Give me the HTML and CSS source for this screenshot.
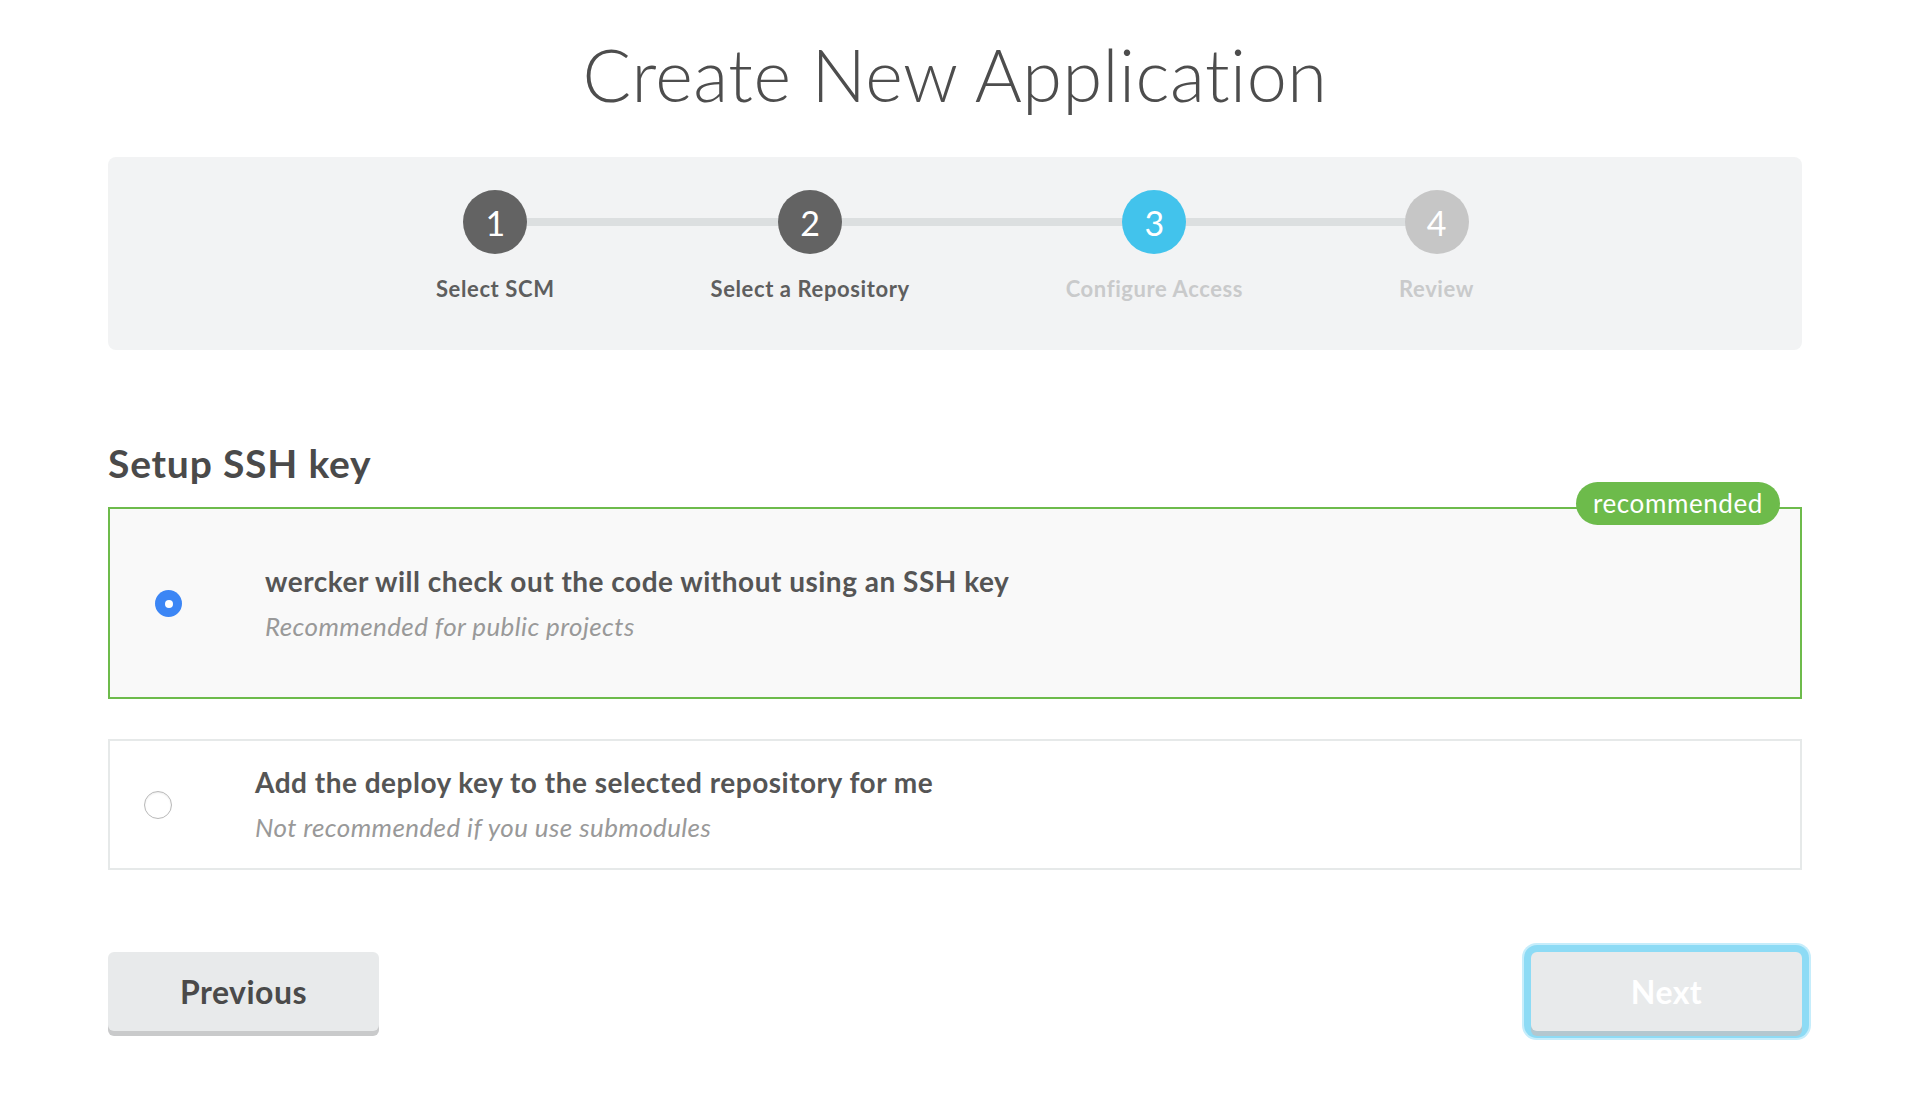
FILE: index.html
```html
<!DOCTYPE html>
<html lang="en">
<head>
<meta charset="utf-8">
<title>Create New Application</title>
<link rel="stylesheet" href="styles.css">
</head>
<body>
<main class="page">
  <h1 class="title">Create New Application</h1>

  <div class="stepper">
    <div class="step step--done">
      <span class="step__dot">1</span>
      <span class="step__label">Select SCM</span>
    </div>
    <div class="step step--done">
      <span class="step__dot">2</span>
      <span class="step__label">Select a Repository</span>
    </div>
    <div class="step step--current">
      <span class="step__dot">3</span>
      <span class="step__label">Configure Access</span>
    </div>
    <div class="step step--todo">
      <span class="step__dot">4</span>
      <span class="step__label">Review</span>
    </div>
  </div>

  <h2 class="section-title">Setup SSH key</h2>

  <div class="options">
    <div class="option option--selected">
      <span class="radio radio--on"></span>
      <span class="option__text">
        <span class="option__title">wercker will check out the code without using an SSH key</span>
        <span class="option__hint">Recommended for public projects</span>
      </span>
      <span class="badge">recommended</span>
    </div>
    <div class="option">
      <span class="radio"></span>
      <span class="option__text">
        <span class="option__title">Add the deploy key to the selected repository for me</span>
        <span class="option__hint">Not recommended if you use submodules</span>
      </span>
    </div>
  </div>

  <div class="actions">
    <button class="btn" type="button">Previous</button>
    <button class="btn btn--next" type="button">Next</button>
  </div>
</main>
</body>
</html>
```

FILE: styles.css
```css
* { box-sizing: border-box; }

html, body {
  margin: 0;
  padding: 0;
  background: #ffffff;
}

body {
  font-family: Lato, "Noto Sans", "Liberation Sans", sans-serif;
  color: #4a4a4a;
}

.page {
  padding: 0 108px 58px;
}

.title {
  margin: 31px 0 0;
  font-size: 72px;
  line-height: 1.2;
  font-weight: 300;
  text-align: center;
  color: #4d4d4d;
  letter-spacing: 0.5px;
}

/* stepper */
.stepper {
  margin-top: 40px;
  background: #f2f3f4;
  border-radius: 8px;
  padding: 33px 0 49px;
  display: flex;
  justify-content: center;
}

.step {
  position: relative;
  padding: 0 78px;
  display: flex;
  flex-direction: column;
  align-items: center;
}

.step::before {
  content: "";
  position: absolute;
  top: 28px;
  left: 0;
  right: 0;
  height: 8px;
  background: #dcdfe0;
}

.step:first-child::before { left: 50%; }
.step:last-child::before { right: 50%; }

.step__dot {
  position: relative;
  z-index: 1;
  width: 64px;
  height: 64px;
  border-radius: 50%;
  display: flex;
  align-items: center;
  justify-content: center;
  font-size: 34px;
  font-weight: 400;
  color: #ffffff;
  background: #636363;
}

.step__label {
  margin-top: 23px;
  font-size: 22px;
  line-height: 24px;
  font-weight: 700;
  letter-spacing: 0.6px;
  color: #5e5e5e;
  white-space: nowrap;
}

.step--current .step__dot { background: #42c3ec; }
.step--todo .step__dot { background: #c6c6c6; }
.step--current .step__label,
.step--todo .step__label { color: #c9cacb; }

/* section */
.section-title {
  margin: 92px 0 22px;
  font-size: 39px;
  line-height: 43px;
  font-weight: 700;
  letter-spacing: 0.8px;
  color: #4a4a4a;
}

.options {
  display: flex;
  flex-direction: column;
  gap: 40px;
}

.option {
  position: relative;
  display: flex;
  align-items: center;
  gap: 83px;
  padding: 26px 34px 26px;
  border: 2px solid #e6e9e9;
  background: #ffffff;
}

.option--selected {
  padding: 57px 45px 56px;
  border-color: #6dbb4b;
  background: #f9f9f9;
}

.option__text {
  display: flex;
  flex-direction: column;
  gap: 15px;
}

.option__title {
  font-size: 28px;
  line-height: 31px;
  font-weight: 700;
  letter-spacing: 0.5px;
  color: #555555;
}

.option__hint {
  font-size: 26px;
  line-height: 29px;
  font-style: italic;
  font-weight: 400;
  letter-spacing: 0.4px;
  color: #999999;
}

.radio {
  flex: none;
  width: 28px;
  height: 28px;
  border-radius: 50%;
  background: #ffffff;
  border: 1.5px solid #b9b9b9;
  box-shadow: inset 0 1px 2px rgba(0, 0, 0, 0.08);
}

.radio--on {
  width: 27px;
  height: 27px;
  border: none;
  background: #3c86f5;
  display: flex;
  align-items: center;
  justify-content: center;
  box-shadow: none;
}

.radio--on::after {
  content: "";
  width: 8px;
  height: 8px;
  border-radius: 50%;
  background: #ffffff;
}

.badge {
  position: absolute;
  top: -27px;
  right: 20px;
  height: 43px;
  padding: 0 17px;
  border-radius: 22px;
  background: #6dbb4b;
  color: #ffffff;
  font-size: 26px;
  line-height: 43px;
  font-weight: 400;
  letter-spacing: 0.6px;
}

/* actions */
.actions {
  margin-top: 82px;
  display: flex;
  justify-content: space-between;
}

.btn {
  width: 271px;
  height: 79px;
  border: none;
  border-radius: 6px;
  background: #e8eaeb;
  font-family: Lato, "Noto Sans", "Liberation Sans", sans-serif;
  font-size: 32px;
  font-weight: 700;
  letter-spacing: 0.45px;
  color: #4a4a4a;
  box-shadow: 0 5px 0 #c9cacb;
  cursor: pointer;
}

.btn--next {
  color: #ffffff;
  box-shadow: 0 5px 0 #b3c7cf, 0 0 0 7px #8ddbf5, 0 0 0 9px #c6edfb;
}
```
